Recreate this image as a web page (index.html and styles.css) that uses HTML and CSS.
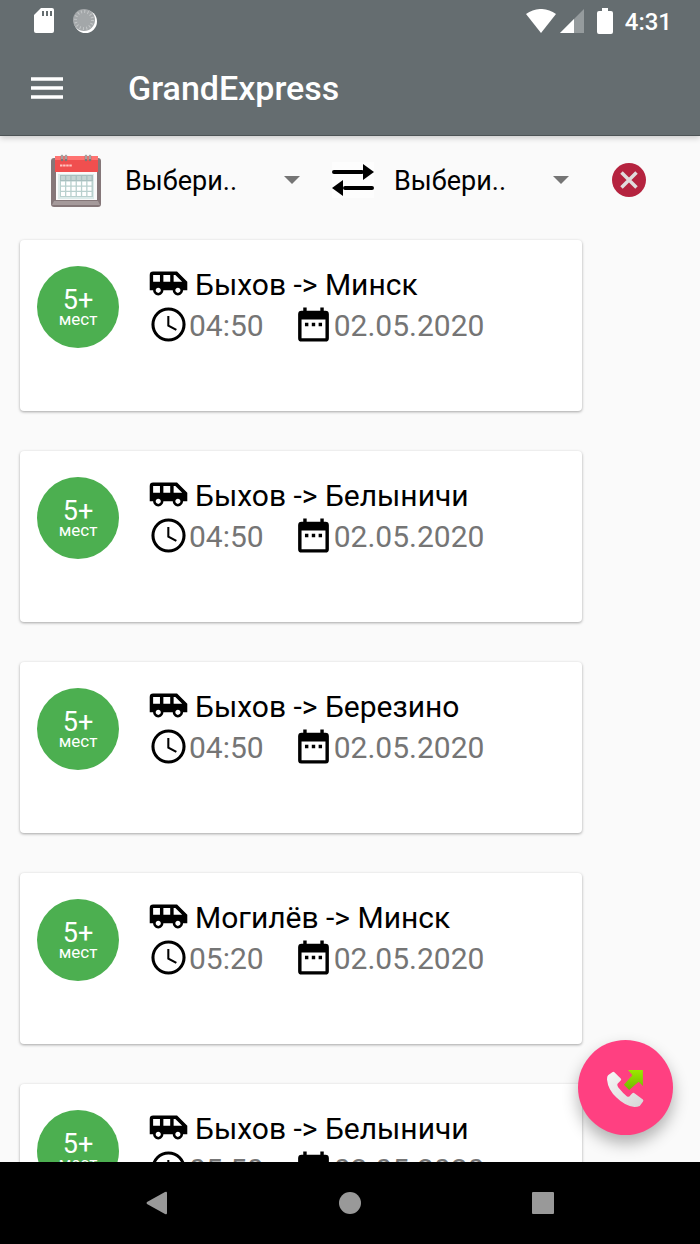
FILE: index.html
```html
<!DOCTYPE html>
<html lang="ru">
<head>
    <meta charset="utf-8">
    <meta name="viewport" content="width=device-width, initial-scale=1">
    <title>GrandExpress</title>
    <link rel="stylesheet" href="styles.css">
</head>
<body>
    <!-- Shared icons for the trip cards -->
    <svg class="sprite" aria-hidden="true">
        <symbol id="bus" viewBox="0 0 24 24">
            <path d="M17 5H3a2 2 0 0 0-2 2v9h2c0 1.65 1.34 3 3 3s3-1.35 3-3h5.5c0 1.65 1.34 3 3 3s3-1.35 3-3H23v-5l-6-6zM3 11V7h4v4H3zm3 6.5c-.83 0-1.5-.67-1.5-1.5s.67-1.5 1.5-1.5 1.5.67 1.5 1.5-.67 1.5-1.5 1.5zm7-6.5H9V7h4v4zm4.5 6.5c-.83 0-1.5-.67-1.5-1.5s.67-1.5 1.5-1.5 1.5.67 1.5 1.5-.67 1.5-1.5 1.5zM15 11V7h1l4 4h-5z"/>
        </symbol>
        <symbol id="clock" viewBox="0 0 24 24">
            <path d="M12 2a10 10 0 1 0 0 20 10 10 0 0 0 0-20zm0 18.2a8.2 8.2 0 1 1 0-16.4 8.2 8.2 0 0 1 0 16.4z"/>
            <path d="M12.5 7h-1.2v6l5 2.7.6-1-4.4-2.4z"/>
        </symbol>
        <symbol id="calendar" viewBox="0 0 24 24">
            <path d="M9 11H7v2h2v-2zm4 0h-2v2h2v-2zm4 0h-2v2h2v-2zm2-7h-1V2h-2v2H8V2H6v2H5a2 2 0 0 0-2 2v14a2 2 0 0 0 2 2h14a2 2 0 0 0 2-2V6a2 2 0 0 0-2-2zm0 16H5V9h14v11z"/>
        </symbol>
    </svg>

    <header class="header">
        <div class="status-bar">
            <svg class="sd-icon" width="20" height="25" viewBox="0 0 20 25">
                <path fill="#fff" d="M7 0h11a2 2 0 0 1 2 2v21a2 2 0 0 1-2 2H2a2 2 0 0 1-2-2V7z"/>
                <path stroke="#656d70" stroke-width="2" d="M9 3v5M13 3v5M17 3v5"/>
            </svg>
            <svg class="sync-icon" width="24" height="24" viewBox="0 0 24 24">
                <circle cx="12.5" cy="12.5" r="11.5" fill="#fff"/>
                <circle cx="11" cy="11" r="11" fill="#a3a7a9"/>
                <circle cx="11" cy="11" r="8.5" fill="none" stroke="#c3c6c7" stroke-width="3" stroke-dasharray="1 2.34"/>
            </svg>
            <svg class="wifi-icon" width="30" height="24" viewBox="0 0 30 24">
                <path fill="#fff" d="M0 5C9-1.700 21-1.700 30 5L15 24z"/>
            </svg>
            <svg class="signal-icon" width="24" height="24" viewBox="0 0 24 24">
                <path fill="#959b9d" d="M24 0v24H0z"/>
                <path fill="#fff" d="M14 10v14H0z"/>
            </svg>
            <svg class="battery-icon" width="16" height="26" viewBox="0 0 16 26">
                <path fill="#fff" d="M5 0h6v3h3a2 2 0 0 1 2 2v19a2 2 0 0 1-2 2H2a2 2 0 0 1-2-2V5a2 2 0 0 1 2-2h3z"/>
            </svg>
            <span class="time">4:31</span>
        </div>
        <div class="toolbar">
            <button class="menu-btn" type="button" aria-label="Меню">
                <svg width="32" height="22" viewBox="0 0 32 22">
                    <path stroke="#fff" stroke-width="3.5" d="M0 2h32M0 11h32M0 20h32"/>
                </svg>
            </button>
            <h1>GrandExpress</h1>
        </div>
    </header>

    <main class="content">
        <form class="filter">
            <button class="date-btn" type="button" aria-label="Дата">
                <svg width="50" height="53" viewBox="0 0 50 53">
                    <rect x="0" y="4" width="50" height="49" rx="3" fill="#857779"/>
                    <path fill="#a59a9b" d="M3 47h44l2 4H1z"/>
                    <path fill="#fafafa" d="M5 17h41v29H5z"/>
                    <path fill="#f04f4f" d="M4 2h43v16H4z"/>
                    <path fill="#ff7371" d="M4 2h43v4H4z"/>
                    <path fill="#dcebea" d="M7 20h36v25H7z"/>
                    <path fill="#a9bfbf" d="M9 21h33v6H9z"/>
                    <path fill="#b9d0ce" d="M9 27h33v16H9z"/>
                    <path stroke="#c4d4d3" stroke-width="4" stroke-dasharray="4 1.3" d="M10 24h31"/>
                    <path stroke="#fff" stroke-width="4" stroke-dasharray="4 1.3" d="M10 29.5h31M10 34.7h31M10 40h31"/>
                    <path stroke="#ffc4c0" stroke-width="2" stroke-dasharray="2.5 .6" d="M9 11.5h12"/>
                    <path stroke="#7d7776" stroke-width="2.5" stroke-linecap="round" d="M11 2v4M15 2v4M35 2v4M39 2v4"/>
                    <path stroke="#d0cccb" stroke-width="1" d="M11 1v4M15 1v4M35 1v4M39 1v4"/>
                </svg>
            </button>
            <div class="select-box from">
                <select aria-label="Откуда">
                    <option>Выбери..</option>
                    <option>Быхов</option>
                    <option>Могилёв</option>
                </select>
            </div>
            <button class="swap-btn" type="button" aria-label="Поменять местами">
                <svg width="42" height="36" viewBox="0 0 42 36">
                    <path stroke="#000" stroke-width="4" d="M2 10h28M13 26h27" stroke-linecap="round"/>
                    <path d="M31 2l11 8-11 8zM11 18L0 26l11 8z"/>
                </svg>
            </button>
            <div class="select-box to">
                <select aria-label="Куда">
                    <option>Выбери..</option>
                    <option>Минск</option>
                    <option>Белыничи</option>
                    <option>Березино</option>
                </select>
            </div>
            <button class="clear-btn" type="reset" aria-label="Сбросить">
                <svg width="34" height="34" viewBox="0 0 34 34">
                    <circle cx="17" cy="17" r="17" fill="#b5233f"/>
                    <path stroke="#e0dcdd" stroke-width="3.5" d="M9.5 9.5l15 15M24.5 9.5l-15 15"/>
                </svg>
            </button>
        </form>

        <div class="trips">
            <article class="card">
                <div class="seats"><span class="count">5+</span><span>мест</span></div>
                <div class="info">
                    <div class="row route"><svg><use href="#bus"/></svg><span>Быхов -&gt; Минск</span></div>
                    <div class="row"><svg><use href="#clock"/></svg><span>04:50</span><svg class="date-icon"><use href="#calendar"/></svg><span>02.05.2020</span></div>
                </div>
            </article>
            <article class="card">
                <div class="seats"><span class="count">5+</span><span>мест</span></div>
                <div class="info">
                    <div class="row route"><svg><use href="#bus"/></svg><span>Быхов -&gt; Белыничи</span></div>
                    <div class="row"><svg><use href="#clock"/></svg><span>04:50</span><svg class="date-icon"><use href="#calendar"/></svg><span>02.05.2020</span></div>
                </div>
            </article>
            <article class="card">
                <div class="seats"><span class="count">5+</span><span>мест</span></div>
                <div class="info">
                    <div class="row route"><svg><use href="#bus"/></svg><span>Быхов -&gt; Березино</span></div>
                    <div class="row"><svg><use href="#clock"/></svg><span>04:50</span><svg class="date-icon"><use href="#calendar"/></svg><span>02.05.2020</span></div>
                </div>
            </article>
            <article class="card">
                <div class="seats"><span class="count">5+</span><span>мест</span></div>
                <div class="info">
                    <div class="row route"><svg><use href="#bus"/></svg><span>Могилёв -&gt; Минск</span></div>
                    <div class="row"><svg><use href="#clock"/></svg><span>05:20</span><svg class="date-icon"><use href="#calendar"/></svg><span>02.05.2020</span></div>
                </div>
            </article>
            <article class="card">
                <div class="seats"><span class="count">5+</span><span>мест</span></div>
                <div class="info">
                    <div class="row route"><svg><use href="#bus"/></svg><span>Быхов -&gt; Белыничи</span></div>
                    <div class="row"><svg><use href="#clock"/></svg><span>05:50</span><svg class="date-icon"><use href="#calendar"/></svg><span>02.05.2020</span></div>
                </div>
            </article>
        </div>

        <button class="call-btn" type="button" aria-label="Позвонить">
            <svg width="38" height="38" viewBox="0 0 36 36">
                <defs>
                    <linearGradient id="phone" x1="0" y1="0" x2="1" y2="1">
                        <stop offset="0" stop-color="#f7f7f7"/>
                        <stop offset="1" stop-color="#d6d6d6"/>
                    </linearGradient>
                    <linearGradient id="arrow" x1="0" y1="0" x2="0" y2="1">
                        <stop offset="0" stop-color="#9be800"/>
                        <stop offset="1" stop-color="#6fb800"/>
                    </linearGradient>
                </defs>
                <path fill="url(#phone)" d="M1 6l4-3q1-1 2 0l6 6q1 1 0 2l-3 3q-1 2 2 5 4 5 7 7 2 1 3-1l2-2q1-1 2 0l8 6q1 1 0 2l-3 4q-2 1-5 1-9-1-17-9Q1 20 0 10q0-3 1-4z"/>
                <path fill="url(#arrow)" d="M20 1h14v15l-4-4-9 8-5-5 8-9z"/>
            </svg>
        </button>
    </main>

    <nav class="nav-bar">
        <button type="button" aria-label="Назад"><svg width="22" height="24" viewBox="0 0 22 24"><path d="M19 1q2-1 2 1v20q0 2-2 1L1 13q-1-1 0-2z"/></svg></button>
        <button type="button" aria-label="Домой"><svg width="22" height="22" viewBox="0 0 22 22"><circle cx="11" cy="11" r="11"/></svg></button>
        <button type="button" aria-label="Обзор"><svg width="22" height="22" viewBox="0 0 22 22"><rect width="22" height="22" rx="1"/></svg></button>
    </nav>
</body>
</html>
```

FILE: styles.css
```css
* {
    box-sizing: border-box;
}

body {
    font-family: Roboto, "Noto Sans", sans-serif;
    background-color: #fafafa;
    color: #000;
    margin: 0;
    height: 100vh;
    display: flex;
    flex-direction: column;
}

button {
    background: none;
    border: none;
    padding: 0;
    cursor: pointer;
}

svg {
    display: block;
    flex-shrink: 0;
}

.sprite {
    display: none;
}

/* Header */
.header {
    background-color: #656d70;
    color: #fff;
    border-bottom: 1px solid #4d5456;
    box-shadow: 0 2px 6px rgba(0, 0, 0, 0.2);
    z-index: 1;
}

.status-bar {
    display: flex;
    align-items: center;
    height: 41px;
    padding: 0 28px 0 34px;
}

.sync-icon {
    margin-left: 19px;
}

.wifi-icon {
    margin-left: auto;
}

.signal-icon {
    margin-left: 4px;
}

.battery-icon {
    margin-left: 13px;
}

.time {
    font-size: 24px;
    font-weight: 500;
    line-height: 24px;
    padding-top: 2px;
    margin-left: 12px;
}

.toolbar {
    display: flex;
    align-items: center;
    height: 94px;
    padding: 0 31px;
}

h1 {
    font-size: 34px;
    font-weight: 500;
    margin: 0 0 0 65px;
}

/* Page content */
.content {
    position: relative;
    flex: 1;
    min-height: 0;
    overflow: hidden;
}

.filter {
    display: flex;
    align-items: center;
    height: 88px;
    padding: 0 54px 0 51px;
}

.select-box {
    display: flex;
    align-items: center;
    flex: 1;
}

.select-box::after {
    content: "";
    border: 8px solid transparent;
    border-top-color: #757575;
    border-bottom: none;
    margin-left: -16px;
    pointer-events: none;
}

.from {
    margin: 0 32px 0 22px;
}

.to {
    margin: 0 43px 0 18px;
}

select {
    appearance: none;
    flex: 1;
    min-width: 0;
    font-family: inherit;
    font-size: 27px;
    color: #000;
    background: none;
    border: none;
    padding: 2px 0 0 2px;
}

.swap-btn {
    background-color: #fdfdfd;
}

/* Trip cards */
.trips {
    display: flex;
    flex-direction: column;
    gap: 40px;
    padding: 16px 118px 16px 20px;
}

.card {
    display: flex;
    min-height: 171px;
    padding: 26px 17px;
    background-color: #fff;
    border-radius: 4px;
    box-shadow: 0 1px 3px rgba(0, 0, 0, 0.35);
}

.seats {
    display: flex;
    flex-direction: column;
    align-items: center;
    justify-content: center;
    width: 82px;
    height: 82px;
    padding-top: 3px;
    border-radius: 50%;
    background-color: #4caf50;
    color: #fff;
    font-size: 17px;
    line-height: 17px;
}

.count {
    font-size: 27px;
    line-height: 22px;
}

.info {
    margin-left: 29px;
}

.row {
    display: flex;
    align-items: center;
    height: 41px;
    padding-bottom: 4px;
    font-size: 30px;
    line-height: 37px;
    color: #757575;
    white-space: nowrap;
}

.row svg {
    width: 41px;
    height: 41px;
    margin-top: -2px;
    fill: #000;
}

.row .date-icon {
    margin-left: 29px;
}

.route {
    gap: 6px;
    color: #000;
}

.call-btn {
    position: absolute;
    right: 27px;
    bottom: 27px;
    display: flex;
    align-items: center;
    justify-content: center;
    width: 95px;
    height: 95px;
    border-radius: 50%;
    background-color: #ff4081;
    box-shadow: 0 8px 16px rgba(0, 0, 0, 0.3);
}

/* System navigation */
.nav-bar {
    display: flex;
    height: 82px;
    padding: 0 60px;
    background-color: #000;
}

.nav-bar button {
    flex: 1;
    display: flex;
    align-items: center;
    justify-content: center;
}

.nav-bar svg {
    fill: #999;
}
```
